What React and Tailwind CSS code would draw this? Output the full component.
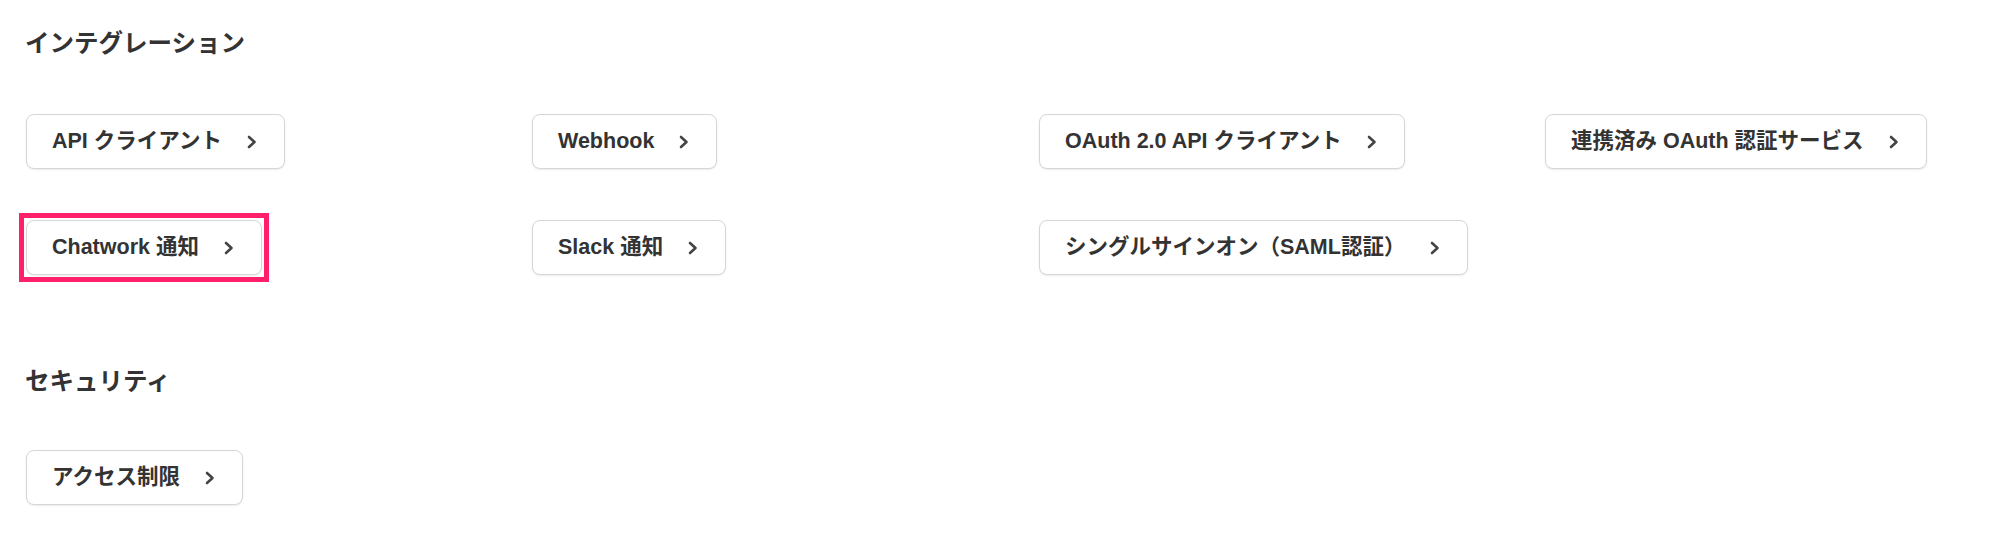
import React from "react";

const FONT = { fontFamily: '"Liberation Sans", "Noto Sans CJK JP", sans-serif' };

function Chevron() {
  return (
    <svg width="12" height="14" viewBox="0 0 12 14" className="shrink-0">
      <polyline
        points="3,2 8.5,7 3,12"
        fill="none"
        stroke="#444444"
        strokeWidth="2.6"
        strokeLinecap="round"
        strokeLinejoin="round"
      />
    </svg>
  );
}

function LinkButton({ label, highlight }) {
  return (
    <div className="relative">
      <button
        className="flex h-[55px] items-center gap-[24px] rounded-[8px] border border-[#d6d6d6] bg-white pl-[25px] pr-[26px] text-[21.5px] font-bold text-[#333333] shadow-[0_1px_2px_rgba(0,0,0,0.08)]"
        style={FONT}
      >
        <span className="whitespace-nowrap">{label}</span>
        <Chevron />
      </button>
      {highlight && (
        <span className="pointer-events-none absolute -inset-[7px] border-[5px] border-[#ff1f6b]" />
      )}
    </div>
  );
}

export default function App() {
  const integ = [
    ["API クライアント"],
    ["Webhook"],
    ["OAuth 2.0 API クライアント"],
    ["連携済み OAuth 認証サービス"],
    ["Chatwork 通知", true],
    ["Slack 通知"],
    ["シングルサインオン（SAML認証）"],
  ];
  return (
    <div className="min-h-[547px] w-full overflow-hidden bg-white pl-[25px] pt-[26px]" style={FONT}>
      <h2 className="h-[36px] text-[24.5px] font-bold leading-[36px] text-[#333333]">インテグレーション</h2>
      <div className="mt-[52px] grid grid-cols-[506px_507px_506px_455px] justify-items-start gap-y-[51px] pl-[1px]">
        {integ.map(([l, h]) => (
          <LinkButton key={l} label={l} highlight={h} />
        ))}
      </div>
      <h2 className="mt-[89px] h-[36px] text-[24.5px] font-bold leading-[36px] text-[#333333]">セキュリティ</h2>
      <div className="mt-[50px] flex pl-[1px]">
        <LinkButton label="アクセス制限" />
      </div>
    </div>
  );
}
